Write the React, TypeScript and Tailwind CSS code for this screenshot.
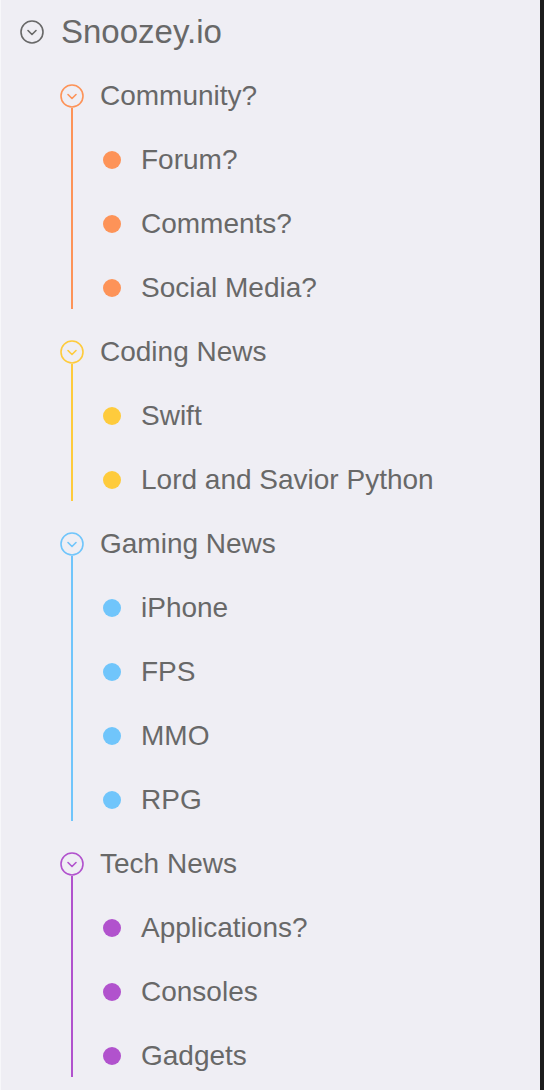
import React from "react";

type Group = {
  name: string;
  color: string;
  items: string[];
};

const groups: Group[] = [
  { name: "Community?", color: "#fd9358", items: ["Forum?", "Comments?", "Social Media?"] },
  { name: "Coding News", color: "#fecb3c", items: ["Swift", "Lord and Savior Python"] },
  { name: "Gaming News", color: "#70c5fb", items: ["iPhone", "FPS", "MMO", "RPG"] },
  { name: "Tech News", color: "#b152cd", items: ["Applications?", "Consoles", "Gadgets"] },
];

const Chevron = ({ color, size }: { color: string; size: number }) => (
  <svg width={size} height={size} viewBox="0 0 24 24" fill="none" className="shrink-0">
    <circle cx="12" cy="12" r="11" stroke={color} strokeWidth="1.6" />
    <path d="M8 10.5l4 4 4-4" stroke={color} strokeWidth="1.6" strokeLinecap="round" strokeLinejoin="round" />
  </svg>
);

const Category = ({ group }: { group: Group }) => (
  <div className="flex ml-[60px]">
    {/* timeline column */}
    <div className="flex flex-col items-center w-6 pt-5 pb-[11px]">
      <Chevron color={group.color} size={24} />
      <div className="flex-1 w-[2px]" style={{ backgroundColor: group.color }} />
    </div>
    <div className="flex flex-col">
      <div className="h-16 flex items-center pl-4 text-[28px]">{group.name}</div>
      {group.items.map((item) => (
        <div key={item} className="h-16 flex items-center pl-[19px] text-[28px]">
          <span className="w-[18px] h-[18px] rounded-full mr-5 shrink-0" style={{ backgroundColor: group.color }} />
          {item}
        </div>
      ))}
    </div>
  </div>
);

export default function App() {
  return (
    <div className="flex w-[544px] h-[1090px] overflow-hidden">
      <div className="w-[540px] h-full bg-[#efeef4] shadow-[inset_1px_0_0_#f7f7fa] text-[#686868] font-['Liberation_Sans',Arial,sans-serif]">
        <div className="h-16 flex items-center pl-5">
          <Chevron color="#686868" size={24} />
          <span className="ml-[17px] text-[33px]">Snoozey.io</span>
        </div>
        {groups.map((g) => (
          <Category key={g.name} group={g} />
        ))}
      </div>
      <div className="w-1 h-full bg-[#1c1c1c]" />
    </div>
  );
}
